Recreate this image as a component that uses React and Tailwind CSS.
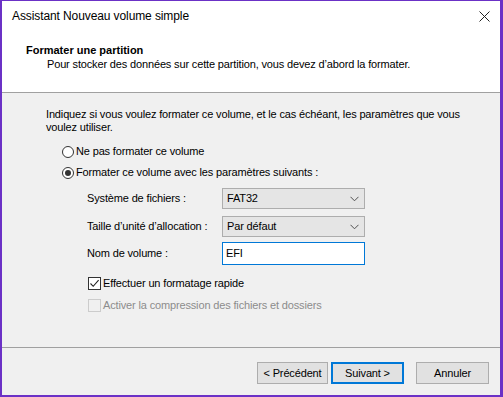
import React from "react";

const Chevron = () => (
  <svg width="9" height="6" viewBox="0 0 9 6" className="shrink-0">
    <path d="M0.5 0.8 L4.5 4.8 L8.5 0.8" fill="none" stroke="#505050" strokeWidth="1" />
  </svg>
);

const Radio = ({ checked }) => (
  <span className="flex h-[12px] w-[12px] shrink-0 items-center justify-center rounded-full border border-[#333333] bg-white">
    {checked && <span className="h-[6px] w-[6px] rounded-full bg-[#333333]" />}
  </span>
);

const Select = ({ value }) => (
  <div className="flex h-[21px] w-[143px] items-center justify-between border border-[#adadad] bg-[#e5e5e5] pl-[4px] pr-[5px]">
    <span>{value}</span>
    <Chevron />
  </div>
);

export default function App() {
  return (
    <div
      className="flex h-[397px] w-[503px] flex-col border-t border-l-2 border-r-[3px] border-b-2 border-[#6b31c6] bg-[#f0f0f0] text-[11px] leading-[13px] tracking-[-0.15px] text-black"
      style={{ fontFamily: '"Liberation Sans", Arial, sans-serif' }}
    >
      {/* Title bar */}
      <div className="flex h-[31px] items-center justify-between bg-white pl-[10px] pr-[10px] text-[12px] tracking-[-0.1px]">
        <span>Assistant Nouveau volume simple</span>
        <svg width="11" height="11" viewBox="0 0 11 11">
          <path d="M0.5 0.5 L10.5 10.5 M10.5 0.5 L0.5 10.5" stroke="#222" strokeWidth="1" />
        </svg>
      </div>
      {/* Header */}
      <div className="flex h-[60px] flex-col bg-white pl-[24px] pt-[11px] leading-[14px]">
        <span className="font-bold tracking-normal">Formater une partition</span>
        <span className="ml-[21px]">Pour stocker des données sur cette partition, vous devez d’abord la formater.</span>
      </div>
      <div className="h-px bg-[#a0a0a0]" />
      {/* Body */}
      <div className="flex flex-1 flex-col">
        <p className="mt-[15px] pl-[44px]">
          Indiquez si vous voulez formater ce volume, et le cas échéant, les paramètres que vous
          <br />
          voulez utiliser.
        </p>
        <div className="mt-[11px] flex h-[13px] items-center gap-[2px] pl-[60px]">
          <Radio />
          <span>Ne pas formater ce volume</span>
        </div>
        <div className="mt-[8px] flex h-[13px] items-center gap-[2px] pl-[60px]">
          <Radio checked />
          <span>Formater ce volume avec les paramètres suivants :</span>
        </div>
        <div className="mt-[9px] flex flex-col pl-[85px]">
          <div className="flex items-center">
            <span className="w-[135px]">Système de fichiers :</span>
            <Select value="FAT32" />
          </div>
          <div className="mt-[7px] flex items-center">
            <span className="w-[135px]">Taille d’unité d’allocation :</span>
            <Select value="Par défaut" />
          </div>
          <div className="mt-[5px] flex items-center">
            <span className="w-[135px]">Nom de volume :</span>
            <div className="flex h-[23px] w-[143px] items-center border border-[#0078d7] bg-white pl-[3px]">EFI</div>
          </div>
        </div>
        <div className="mt-[12px] flex h-[13px] items-center gap-[2px] pl-[86px]">
          <span className="flex h-[13px] w-[13px] shrink-0 items-center justify-center border border-[#333333] bg-white">
            <svg width="11" height="11" viewBox="0 0 11 11">
              <path d="M1.5 5.5 L4.2 8.3 L9.6 2.2" fill="none" stroke="#222" strokeWidth="1.1" />
            </svg>
          </span>
          <span>Effectuer un formatage rapide</span>
        </div>
        <div className="mt-[9px] flex h-[13px] items-center gap-[2px] pl-[86px] text-[#8c8c8c]">
          <span className="h-[13px] w-[13px] shrink-0 border border-[#cccccc] bg-[#f0f0f0]" />
          <span>Activer la compression des fichiers et dossiers</span>
        </div>
        <div className="flex-1" />
        <div className="h-px bg-[#a0a0a0]" />
        <div className="flex h-[47px] items-start justify-end pr-[11px] pt-[14px]">
          <button className="flex h-[22px] w-[71px] items-center justify-center border border-[#adadad] bg-[#e1e1e1]">&lt; Précédent</button>
          <button className="ml-[3px] flex h-[22px] w-[73px] items-center justify-center border-2 border-[#0078d7] bg-[#e1e1e1]">Suivant &gt;</button>
          <button className="ml-[12px] flex h-[22px] w-[73px] items-center justify-center border border-[#adadad] bg-[#e1e1e1]">Annuler</button>
        </div>
      </div>
    </div>
  );
}
